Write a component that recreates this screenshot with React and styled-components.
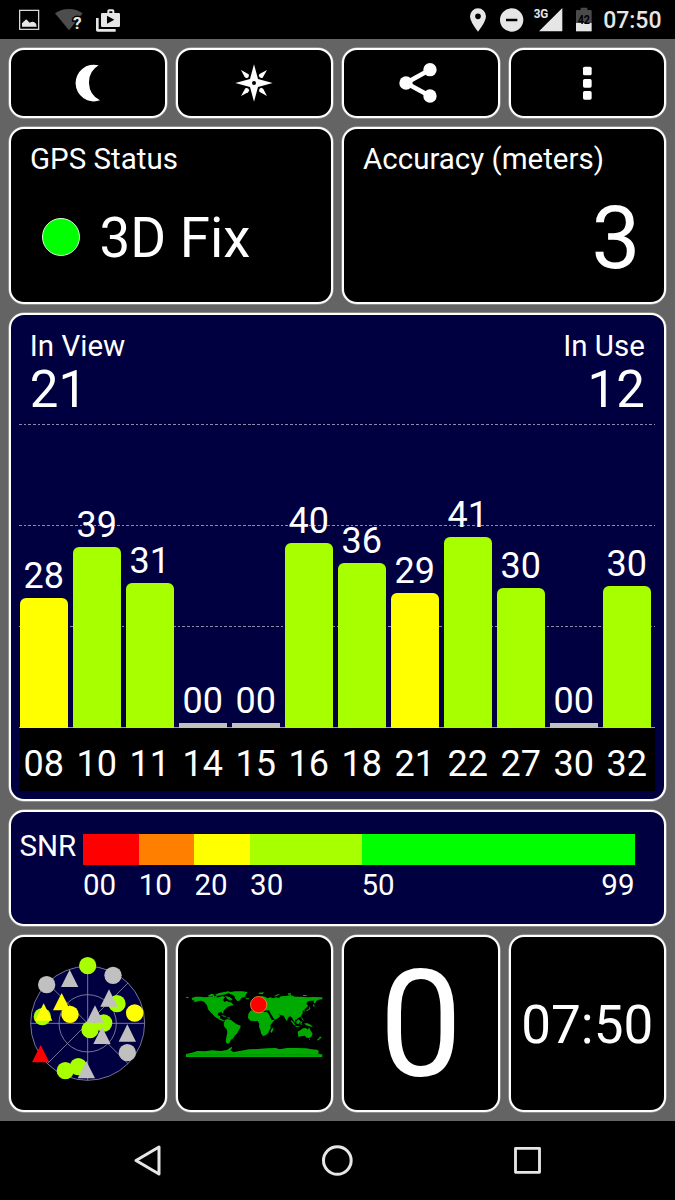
import React from "react";
import styled, { createGlobalStyle } from "styled-components";

const GlobalStyle = createGlobalStyle`
  * { box-sizing: border-box; }
  html, body { margin: 0; padding: 0; background: #000; }
  body { font-family: Roboto, "Liberation Sans", sans-serif; color: #fff; }
  svg { display: block; flex: none; }
`;

const LIME = "#a8ff00";
const YELLOW = "#ffff00";
const GREY = "#c0c0c0";

const Screen = styled.div`
  width: 675px;
  height: 1200px;
  display: flex;
  flex-direction: column;
  overflow: hidden;
  background: #000;
`;

const StatusBar = styled.header`
  height: 39px;
  flex: none;
  display: flex;
  align-items: center;
  justify-content: space-between;
  padding: 0 13.5px 0 19px;
`;

const StatusGroup = styled.div`
  display: flex;
  align-items: center;
`;

const StatusClock = styled.span`
  font-size: 23px;
  font-weight: 500;
  line-height: 39px;
  padding-top: 2px;
  color: #e6e6e6;
  margin-left: 10.5px;
`;

const Dashboard = styled.main`
  flex: none;
  height: 1082px;
  padding: 9px 9px 0;
  background: #646464;
  display: flex;
  flex-direction: column;
  gap: 9px;
`;

const CardRow = styled.div`
  display: grid;
  grid-template-columns: repeat(${(p) => p.$columns}, 1fr);
  gap: 9px;
  height: ${(p) => p.$height}px;
  flex: none;
`;

const Card = styled.section`
  border: 2px solid #fff;
  border-radius: 15px;
  box-shadow: 0 0 0 0.5px rgba(255, 255, 255, 0.55);
  background: ${(p) => (p.$navy ? "#000040" : "#000")};
  min-width: 0;
`;

const ButtonCard = styled(Card).attrs({ as: "button", type: "button" })`
  padding: 0;
  display: flex;
  align-items: center;
  justify-content: center;
`;

const CenterCard = styled(Card)`
  display: flex;
  align-items: center;
  justify-content: center;
  padding-top: ${(p) => p.$drop || 0}px;
  padding-bottom: ${(p) => p.$lift || 0}px;
`;

const ReadoutCard = styled(Card)`
  padding: 12px 19px 0;
  display: flex;
  flex-direction: column;
`;

const Label = styled.div`
  font-size: 29.5px;
  line-height: 36px;
  white-space: nowrap;
`;

const FixRow = styled.div`
  display: flex;
  align-items: center;
  gap: 19.5px;
  height: 56px;
  margin-top: 32px;
  padding-left: 12px;
`;

const FixLight = styled.span`
  width: 38px;
  height: 38px;
  border-radius: 50%;
  border: 1px solid #d8ffd8;
  background: #00ff00;
`;

const Value = styled.div`
  font-size: ${(p) => p.$size}px;
  line-height: ${(p) => p.$size}px;
  text-align: ${(p) => p.$align || "left"};
  white-space: nowrap;
`;

const FixValue = styled(Value)`
  line-height: 56px;
  padding-top: 2px;
`;

const AccuracyValue = styled(Value)`
  margin: 18px 4.5px 0 0;
`;

const SatelliteCard = styled(Card)`
  height: 488px;
  flex: none;
  padding: 0 8.7px 0 8.3px;
  display: flex;
  flex-direction: column;
`;

const Totals = styled.div`
  display: flex;
  justify-content: space-between;
  padding: 13px 10.5px 0;
  height: 109px;
`;

const Total = styled.div`
  text-align: ${(p) => p.$align};
`;

const Plot = styled.div`
  height: 304px;
  display: grid;
  grid-template: 1fr / 1fr;
  border-bottom: 1px solid #9a9a9a;
`;

const GridLines = styled.div`
  grid-area: 1 / 1;
  display: flex;
  flex-direction: column;
`;

const GridLine = styled.div`
  height: 101px;
  flex: none;
  background: repeating-linear-gradient(90deg, #8c8ca8 0 2.67px, transparent 2.67px 4.67px) 0 0 / 100% 1px no-repeat;
`;

const Bars = styled.div`
  grid-area: 1 / 1;
  display: grid;
  grid-template-columns: repeat(12, 1fr);
`;

const BarColumn = styled.div`
  display: flex;
  flex-direction: column;
  justify-content: flex-end;
  padding: 0 4.2px 0 0.3px;
`;

const BarLabel = styled.div`
  font-size: 36px;
  line-height: 36px;
  text-align: center;
  margin: 0 -3px 4px;
`;

const Bar = styled.div`
  flex: none;
  border-radius: ${(p) => (p.$flat ? 0 : "6px 6px 0 0")};
  background: ${(p) => p.$color};
  margin-bottom: -1px;
`;

const IdStrip = styled.div`
  height: 63px;
  background: #000;
  display: grid;
  grid-template-columns: repeat(12, 1fr);
  padding-top: 18px;
`;

const SatelliteId = styled.div`
  font-size: 36px;
  line-height: 36px;
  text-align: center;
  padding-right: 3.9px;
`;

const SnrCard = styled(Card)`
  height: 116px;
  flex: none;
  display: flex;
  padding: 21.5px 29.5px 0 8.5px;
`;

const SnrLabel = styled(Label)`
  width: 63.5px;
  flex: none;
  line-height: 25px;
`;

const SnrScale = styled.div`
  flex: 1;
  display: flex;
`;

const SnrStep = styled.div`
  flex: ${(p) => p.$span} 0 0;
  min-width: 0;
`;

const SnrColor = styled.div`
  height: 31.5px;
  background: ${(p) => p.$color};
`;

const SnrTicks = styled.div`
  display: flex;
  justify-content: space-between;
  font-size: 29.5px;
  line-height: 30px;
  padding-top: 5px;
`;

const NavBar = styled.nav`
  flex: 1;
  display: flex;
  justify-content: center;
  align-items: center;
  gap: 158.5px;
`;

/* Icons share one drawing grid of three units per pixel. */
function Glyph({ box, children, ...rest }) {
  const [, , w, h] = box;
  return (
    <svg viewBox={box.join(" ")} width={w / 3} height={h / 3} aria-hidden="true" {...rest}>
      {children}
    </svg>
  );
}

const NotificationIcons = () => (
  <Glyph box={[57, 0, 310, 117]} fill="#e6e6e6">
    <rect x="59" y="31" width="57" height="57" fill="none" stroke="#e6e6e6" strokeWidth="3.6" />
    <path d="M66 80V70L77 59Q80 58 83 62L89 68L94 66Q99 64 103 67Q110 70 110 80Z" />
    <path d="M207 91L165 40Q183 27 207 27Q230 27 248 40Z" fill="#4d4d4d" />
    <text x="219" y="88" fontFamily="Roboto" fontSize="52" fontWeight="700" stroke="#000" strokeWidth="9" paintOrder="stroke">?</text>
    <path d="M288 54H296V87H347V95H293Q288 95 288 90Z" />
    <path fillRule="evenodd" d="M322 39V33Q322 28 327 28H338Q343 28 343 33V39H356Q360 39 360 43V77Q360 81 356 81H307Q303 81 303 77V43Q303 39 307 39ZM328 39H337V34H328ZM321 47V71L343 59Z" />
  </Glyph>
);

const SystemIcons = () => (
  <Glyph box={[402, 0, 370, 117]} fill="#e6e6e6">
    <path fillRule="evenodd" d="M429 25A24 24 0 0 1 453 49Q453 65 429 95Q405 65 405 49A24 24 0 0 1 429 25ZM429 40.500A8.500 8.500 0 1 0 429 57.500A8.500 8.500 0 1 0 429 40.500Z" />
    <path fillRule="evenodd" d="M530 25A35 35 0 1 1 530 95A35 35 0 1 1 530 25ZM513 56V64H547V56Z" />
    <text x="596" y="55" fontFamily="Roboto" fontSize="40" fontWeight="700" textLength="44" lengthAdjust="spacingAndGlyphs">3G</text>
    <path d="M612 94L682 24V94Z" />
    <path d="M737 23H757V30H767Q770 30 770 33V69H723V33Q723 30 726 30H737Z" fill="#4a4a4a" />
    <path d="M723 69H770V94H723Z" />
    <text x="746.500" y="73" textAnchor="middle" fontFamily="Roboto" fontSize="38" fontWeight="700" fill="#000" textLength="37" lengthAdjust="spacingAndGlyphs">42</text>
  </Glyph>
);

const MoonIcon = () => (
  <Glyph box={[177, 174, 168, 150]} fill="#fff">
    <path d="M293 196A55 55 0 1 0 297 301A60 60 0 0 1 293 196Z" />
  </Glyph>
);

const CompassIcon = () => (
  <Glyph box={[678, 174, 168, 150]}>
    <path fill="#fff" d="M762 193L774 237L818 249L774 261L762 305L750 261L706 249L750 237Z" />
    {[0, 90, 180, 270].map((a) => (
      <path key={a} fill="#fff" d="M723 210L746 223Q749 233 739 235L734 231Z" transform={`rotate(${a} 762 249)`} />
    ))}
    <circle cx="762" cy="249" r="6" fill="#000" />
  </Glyph>
);

const ShareIcon = () => (
  <Glyph box={[172, 174, 170, 150]} fill="#fff">
    <path d="M286 209L214 249L286 288" fill="none" stroke="#fff" strokeWidth="14" />
    <circle cx="214" cy="249" r="20" />
    <circle cx="286" cy="209" r="20" />
    <circle cx="286" cy="288" r="20" />
  </Glyph>
);

const MoreIcon = () => (
  <Glyph box={[672, 174, 170, 150]} fill="#fff">
    <rect x="744" y="200" width="26" height="26" rx="5" />
    <rect x="744" y="237" width="26" height="26" rx="5" />
    <rect x="744" y="273" width="26" height="26" rx="5" />
  </Glyph>
);

const skyMarks = [
  ["c", 262, 109, LIME], ["c", 139, 166, GREY], ["c", 338, 138, GREY],
  ["t", 208, 121, GREY], ["t", 184, 191, YELLOW], ["c", 209, 255, YELLOW],
  ["c", 126, 262, LIME], ["t", 130, 222, YELLOW], ["c", 350, 223, LIME],
  ["t", 326, 180, GREY], ["c", 403, 251, YELLOW], ["c", 310, 281, LIME],
  ["c", 269, 301, LIME], ["t", 284, 228, GREY], ["t", 305, 292, GREY],
  ["t", 381, 285, GREY], ["c", 381, 370, GREY], ["c", 234, 412, LIME],
  ["c", 195, 424, LIME], ["t", 258, 395, GREY], ["t", 121, 347, "#ff0000"],
];

const SkyView = () => (
  <Glyph box={[86, 80, 352, 376]}>
    <g stroke="#8c8ca8" strokeWidth="2.500">
      <circle cx="262" cy="282" r="171" fill="#000040" />
      <circle cx="262" cy="282" r="86" fill="none" />
      <path d="M262 111V453M91 282H433M141 161L383 403M141 403L383 161" />
    </g>
    {skyMarks.map(([kind, x, y, color]) =>
      kind === "c" ? (
        <circle key={`${x}-${y}`} cx={x} cy={y} r="26" fill={color} />
      ) : (
        <path key={`${x}-${y}`} d={`M${x} ${y}l26 52h-52z`} fill={color} />
      )
    )}
  </Glyph>
);

const WorldMap = () => (
  <Glyph box={[44, 62, 416, 204]} fill="#00aa00">
    {/* North America */}
    <path d="M64 86L75 82L90 82L104 84L118 82L132 84L146 84L156 80L164 84L158 92L163 98L170 94L174 98L182 99L189 106L182 109L172 112L166 118L160 124L158 133L153 128L144 130L142 138L150 140L148 146L158 152L164 155L158 156L148 151L138 145L132 141L126 134L120 128L113 120L110 108L101 97L92 94L84 95L76 98L68 99L74 95L66 92Z" />
    <path d="M47 82L56 84L53 87L47 85ZM112 79L124 73L132 76L130 81L118 82ZM134 76L148 70L158 73L152 78L140 80ZM150 70L174 66L182 69L168 74L158 77L150 75ZM164 80L178 83L187 90L180 94L171 89ZM152 137L164 139L168 142L160 142ZM171 144L180 145L178 148L171 147ZM184 104L190 107L184 109ZM126 81L140 80L138 85L128 84Z" />
    {/* Greenland and Iceland */}
    <path d="M176 69L194 66L216 66L232 68L227 75L224 82L213 86L207 94L201 95L195 88L192 80L186 76L178 74ZM226 87L236 86L235 90L228 90Z" />
    {/* South America */}
    <path d="M164 152L172 149L182 152L190 158L198 164L211 169L210 175L204 184L201 192L193 199L189 207L182 211L177 222L172 223L166 219L168 204L171 190L170 181L162 172L160 163Z" />
    {/* Europe and Asia */}
    <path d="M243 120L242 112L250 112L246 101L256 96L262 88L274 80L284 82L292 87L300 84L308 87L318 84L326 86L331 81L346 80L360 77L374 82L392 82L410 84L430 83L456 84L456 90L445 91L438 95L434 103L429 99L432 94L421 94L411 97L408 104L414 109L407 116L402 121L404 127L398 123L397 132L391 142L382 147L378 152L374 150L375 162L370 155L366 146L359 140L353 146L350 156L345 149L340 139L330 137L324 133L330 140L324 146L313 151L307 142L300 131L296 123L288 124L282 123L277 122L270 118L262 118L252 121Z" />
    <path d="M240 101L244 98L246 106L240 107ZM264 70L281 69L277 75L267 74ZM310 81L322 75L330 74L318 81ZM352 72L362 72L362 76L354 76ZM398 77L410 77L408 80L398 80ZM428 103L433 108L432 114L429 110ZM418 110L420 118L410 126L408 123L416 118Z" />
    {/* Africa */}
    <path d="M240 124L254 121L264 121L268 126L278 128L288 127L294 132L300 144L304 152L313 151L306 160L300 168L301 177L296 184L294 191L286 198L278 200L273 194L270 182L266 172L267 163L262 155L250 155L240 154L233 146L234 134ZM303 180L309 174L309 182L304 190L300 188Z" />
    {/* South-east Asia and Oceania */}
    <path d="M361 151L369 158L376 168L370 166L362 156ZM378 156L386 150L390 156L385 165L378 162ZM390 156L397 157L393 161L396 167L390 165ZM392 141L397 148L401 154L395 151ZM402 162L412 162L422 167L427 173L416 171L406 167ZM372 169L385 171L391 173L378 173Z" />
    <path d="M382 187L391 182L398 177L407 176L412 181L416 174L421 184L427 193L423 202L417 206L409 205L403 199L394 200L384 203ZM415 208L420 208L418 212ZM448 201L454 204L448 210L442 214L441 210L447 206Z" />
    {/* Antarctica */}
    <path d="M47 254L64 250L82 245L104 246L126 243L152 245L170 242L178 236L186 232L184 238L180 243L190 248L212 244L236 240L262 239L290 237L316 236L328 240L350 236L380 236L408 237L424 240L440 241L446 246L443 252L456 256V263H47Z" />
    <path d="M47 256H456" stroke="#008800" strokeWidth="1.500" />
    <circle cx="265" cy="106" r="24.500" fill="#ff0000" stroke="#e89030" strokeWidth="2.500" />
  </Glyph>
);

const satellites = [
  { id: "08", snr: "28", height: 130, color: YELLOW },
  { id: "10", snr: "39", height: 181, color: LIME },
  { id: "11", snr: "31", height: 145.5, color: LIME },
  { id: "14", snr: "00", height: 5, color: GREY },
  { id: "15", snr: "00", height: 5, color: GREY },
  { id: "16", snr: "40", height: 185.5, color: LIME },
  { id: "18", snr: "36", height: 165, color: LIME },
  { id: "21", snr: "29", height: 135, color: YELLOW },
  { id: "22", snr: "41", height: 191, color: LIME },
  { id: "27", snr: "30", height: 140, color: LIME },
  { id: "30", snr: "00", height: 5, color: GREY },
  { id: "32", snr: "30", height: 142, color: LIME },
];

const snrSteps = [
  { span: 10, color: "#ff0000", ticks: ["00"] },
  { span: 10, color: "#ff8000", ticks: ["10"] },
  { span: 10, color: YELLOW, ticks: ["20"] },
  { span: 20, color: LIME, ticks: ["30"] },
  { span: 49, color: "#00ff00", ticks: ["50", "99"] },
];

export default function App() {
  return (
    <Screen>
      <GlobalStyle />
      <StatusBar>
        <StatusGroup><NotificationIcons /></StatusGroup>
        <StatusGroup>
          <SystemIcons />
          <StatusClock>07:50</StatusClock>
        </StatusGroup>
      </StatusBar>

      <Dashboard>
        <CardRow $columns={4} $height={70}>
          <ButtonCard aria-label="Night mode"><MoonIcon /></ButtonCard>
          <ButtonCard aria-label="Compass"><CompassIcon /></ButtonCard>
          <ButtonCard aria-label="Share"><ShareIcon /></ButtonCard>
          <ButtonCard aria-label="More options"><MoreIcon /></ButtonCard>
        </CardRow>

        <CardRow $columns={2} $height={177}>
          <ReadoutCard>
            <Label>GPS Status</Label>
            <FixRow>
              <FixLight />
              <FixValue $size={54.7}>3D Fix</FixValue>
            </FixRow>
          </ReadoutCard>
          <ReadoutCard>
            <Label>Accuracy (meters)</Label>
            <AccuracyValue $size={87} $align="right">3</AccuracyValue>
          </ReadoutCard>
        </CardRow>

        <SatelliteCard $navy>
          <Totals>
            <Total $align="left">
              <Label>In View</Label>
              <Value $size={51}>21</Value>
            </Total>
            <Total $align="right">
              <Label>In Use</Label>
              <Value $size={51} $align="right">12</Value>
            </Total>
          </Totals>
          <Plot>
            <GridLines>
              <GridLine />
              <GridLine />
              <GridLine />
            </GridLines>
            <Bars>
              {satellites.map((s) => (
                <BarColumn key={s.id}>
                  <BarLabel>{s.snr}</BarLabel>
                  <Bar $color={s.color} $flat={s.snr === "00"} style={{ height: s.height }} />
                </BarColumn>
              ))}
            </Bars>
          </Plot>
          <IdStrip>
            {satellites.map((s) => (
              <SatelliteId key={s.id}>{s.id}</SatelliteId>
            ))}
          </IdStrip>
        </SatelliteCard>

        <SnrCard $navy>
          <SnrLabel>SNR</SnrLabel>
          <SnrScale>
            {snrSteps.map((step) => (
              <SnrStep key={step.color} $span={step.span}>
                <SnrColor $color={step.color} />
                <SnrTicks>
                  {step.ticks.map((t) => (
                    <span key={t}>{t}</span>
                  ))}
                </SnrTicks>
              </SnrStep>
            ))}
          </SnrScale>
        </SnrCard>

        <CardRow $columns={4} $height={177}>
          <CenterCard $lift={9}><SkyView /></CenterCard>
          <CenterCard $drop={1}><WorldMap /></CenterCard>
          <CenterCard $drop={4}><Value $size={148}>0</Value></CenterCard>
          <CenterCard $drop={3}><Value $size={53}>07:50</Value></CenterCard>
        </CardRow>
      </Dashboard>

      <NavBar>
        <Glyph box={[39, 28, 93, 99]} fill="none" stroke="#e6e6e6" strokeWidth="9" strokeLinejoin="round">
          <path d="M51 77.500L120 37V118Z" />
        </Glyph>
        <Glyph box={[604, 28, 98, 99]} fill="none" stroke="#e6e6e6" strokeWidth="9">
          <circle cx="653" cy="77.500" r="41.500" />
        </Glyph>
        <Glyph box={[531, 28, 93, 99]} fill="none" stroke="#e6e6e6" strokeWidth="8.500" strokeLinejoin="round">
          <rect x="541.500" y="41" width="72" height="72" />
        </Glyph>
      </NavBar>
    </Screen>
  );
}
